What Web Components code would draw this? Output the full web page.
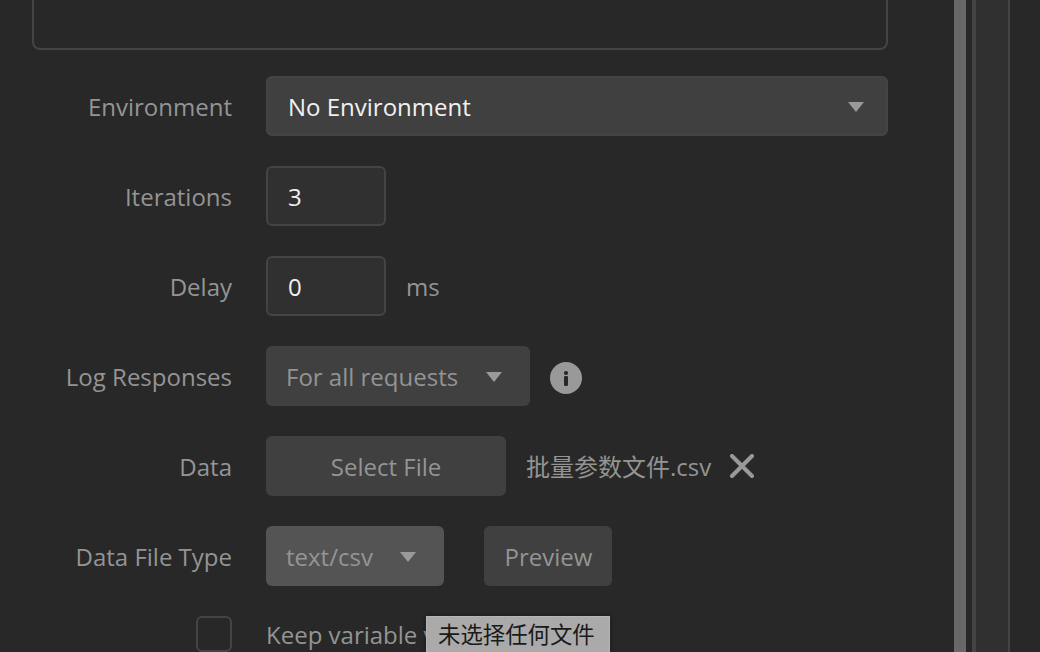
<!DOCTYPE html>
<html lang="en">
<head>
<meta charset="utf-8">
<title>Collection Runner</title>
<style>
html,body{margin:0;height:100%;overflow:hidden;background:#282828}
body{font:24px/60px "Open Sans","Noto Sans CJK SC",sans-serif;color:#949494}
</style>
</head>
<body>
<runner-app></runner-app>
<script>
const define = (name, html) => {
  const template = document.createElement('template');
  template.innerHTML = html;
  customElements.define(name, class extends HTMLElement {
    constructor() {
      super();
      this.attachShadow({mode: 'open'}).append(template.content.cloneNode(true));
    }
  });
};

define('form-row', `<style>
  :host{display:grid;grid-template-columns:200px minmax(0,1fr);grid-template-rows:100%;column-gap:34px;height:60px;white-space:nowrap}
  .label{text-align:right;line-height:62px}
  .field{display:flex;align-items:center}
</style><div class="label"><slot name="label"></slot></div><div class="field"><slot></slot></div>`);

define('text-box', `<style>
  :host{display:block;box-sizing:border-box;width:120px;height:60px;border:2px solid #444;border-radius:6px;background:#303030;color:#f0f0f0;padding-left:20px;line-height:58px}
</style><slot></slot>`);

define('drop-down', `<style>
  :host{display:flex;box-sizing:border-box;align-items:center;justify-content:space-between;height:60px;border-radius:6px;background:#404040;padding:2px 28px 0 20px;line-height:58px}
  :host([wide]){width:622px;border:2px solid #444;color:#f0f0f0;padding:2px 22px 0 20px;line-height:54px}
  :host([active]){background:#545454}
  svg{display:block;width:16px;height:10px}
</style><slot></slot><svg viewBox="0 0 16 10"><path d="M0 0H16L8 10Z" fill="#999"/></svg>`);

define('push-button', `<style>
  :host{display:block;height:60px;border-radius:6px;background:#404040;text-align:center;line-height:62px}
</style><slot></slot>`);

define('info-icon', `<style>:host{display:block;width:32px;height:32px;margin:4px 0 0 20px}svg{display:block}</style>
<svg width="32" height="32" viewBox="0 0 32 32"><circle cx="16" cy="16" r="16" fill="#999"/><circle cx="16" cy="11" r="2.1" fill="#282828"/><rect x="14" y="14" width="4" height="10" rx="1.2" fill="#282828"/></svg>`);

define('close-icon', `<style>:host{display:block;width:24px;height:24px;margin:0 0 0 19px}svg{display:block}</style>
<svg width="24" height="24" viewBox="0 0 24 24"><path d="M2 2L22 22M22 2L2 22" fill="none" stroke="#999" stroke-width="4" stroke-linecap="round"/></svg>`);

define('check-box', `<style>:host{display:inline-block;vertical-align:top;box-sizing:border-box;width:36px;height:36px;border:2px solid #444;border-radius:6px}</style>`);

define('hover-tip', `<style>
  :host{position:absolute;left:394px;top:0;box-sizing:border-box;width:184px;height:46px;padding-left:11px;border:1px solid #b5b5b5;background:#aaa;color:#1a1a1a;font:22.4px/32px "Noto Sans CJK SC",sans-serif;box-shadow:0 0 5px #0006}
</style><slot></slot>`);

define('request-list', `<style>
  :host{display:block;box-sizing:border-box;width:856px;height:50px;margin-left:32px;border:2px solid #444;border-top:0;border-radius:0 0 8px 8px}
</style><slot></slot>`);

define('side-rail', `<style>
  :host{display:flex;height:100%}
  .thumb{width:12px;background:#686868;margin-right:6px}
  .rail{box-sizing:border-box;width:38px;background:#303030;border:solid #444;border-width:0 2px 0 4px}
</style><div class="thumb"></div><div class="rail"></div>`);

define('runner-app', `<style>
  :host{display:grid;grid-template-columns:954px 86px;height:652px;overflow:hidden}
  main{height:652px;overflow:hidden}
  .rows{display:grid;row-gap:30px;margin:26px 0 0 32px}
  .ms{margin-left:20px;padding-top:2px}
  .log{width:264px;padding-right:28px}
  .select{width:240px}
  .name{margin-left:20px;padding-top:2px}
  .type{width:178px}
  .preview{box-sizing:border-box;width:128px;margin-left:40px;padding-left:1px}
  .keep{position:relative;height:36px;line-height:34px}
  .keep-text{padding-top:2px}
</style>
<main>
  <request-list></request-list>
  <div class="rows">
    <form-row><span slot="label">Environment</span><drop-down wide>No Environment</drop-down></form-row>
    <form-row><span slot="label">Iterations</span><text-box>3</text-box></form-row>
    <form-row><span slot="label">Delay</span><text-box>0</text-box><span class="ms">ms</span></form-row>
    <form-row><span slot="label">Log Responses</span><drop-down class="log">For all requests</drop-down><info-icon></info-icon></form-row>
    <form-row><span slot="label">Data</span><push-button class="select">Select File</push-button><span class="name">批量参数文件.csv</span><close-icon></close-icon></form-row>
    <form-row><span slot="label">Data File Type</span><drop-down class="type" active>text/csv</drop-down><push-button class="preview">Preview</push-button></form-row>
    <form-row class="keep"><check-box slot="label"></check-box><span class="keep-text">Keep variable v</span><hover-tip>未选择任何文件</hover-tip></form-row>
  </div>
</main>
<side-rail></side-rail>`);
</script>
</body>
</html>
